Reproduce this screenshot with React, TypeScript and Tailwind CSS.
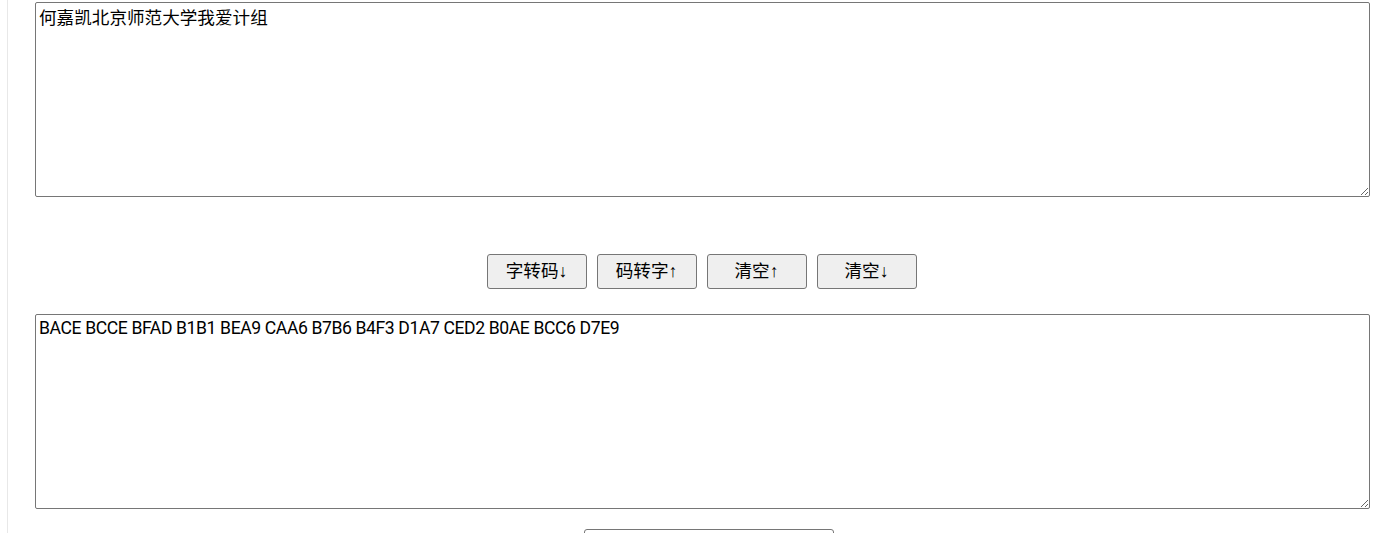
import React from "react";

export default function App() {
  return (
    <div className="h-[533px] overflow-hidden bg-white">
      <div className="ml-[7px] h-full border-l border-[#e8e8e8] pl-[27px] pt-[2px]">
        <div className="w-[1335px] flex flex-col items-center">
          <textarea
            className="block w-[1335px] h-[195px] border border-[#767676] rounded-[2px] px-[3px] py-[3px] text-[17.6px] text-black resize-y leading-[1.2]"
            style={{ fontFamily: '"Noto Sans CJK SC", sans-serif' }}
            defaultValue="何嘉凯北京师范大学我爱计组"
          />
          <div className="mt-[57px] mr-[2px] flex gap-[10px]">
            {["字转码↓", "码转字↑", "清空↑", "清空↓"].map((t) => (
              <button
                key={t}
                className="w-[100px] h-[35px] bg-[#efefef] border border-[#767676] rounded-[3px] text-[17.6px] text-black flex items-center justify-center"
                style={{ fontFamily: '"Liberation Sans", "Noto Sans CJK SC", sans-serif' }}
              >
                {t}
              </button>
            ))}
          </div>
          <textarea
            className="mt-[25px] block w-[1335px] h-[195px] border border-[#767676] rounded-[2px] px-[3px] py-[3px] text-[17.6px] tracking-[-0.4px] text-black resize-y leading-[1.2]"
            style={{ fontFamily: 'Roboto, "Noto Sans", sans-serif' }}
            defaultValue="BACE BCCE BFAD B1B1 BEA9 CAA6 B7B6 B4F3 D1A7 CED2 B0AE BCC6 D7E9"
          />
          <div className="mt-[20px] ml-[12px] w-[250px] h-[35px] border border-[#767676] rounded-[3px] bg-white" />
        </div>
      </div>
    </div>
  );
}
